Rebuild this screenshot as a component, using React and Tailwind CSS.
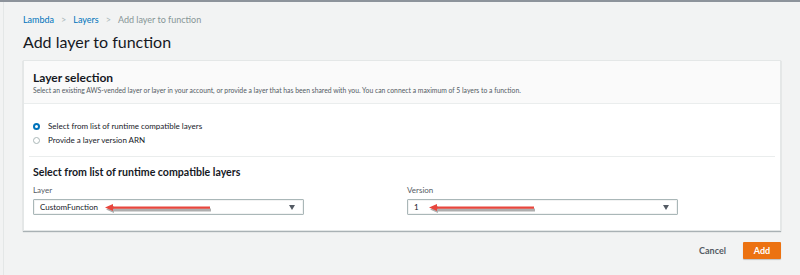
import React from 'react'

const font = { fontFamily: '"Lato", "Open Sans", "Liberation Sans", sans-serif' }

function Arrow({ length }) {
  return (
    <svg width={length + 6} height="12" viewBox={`0 0 ${length + 6} 12`} className="block">
      <g transform="translate(1,2)">
        <path d={`M1 5 L9 1.5 L9 4 L${length} 4 L${length} 7 L9 7 L9 8.5 Z`} fill="#6b6b6b" opacity="0.55" transform="translate(1,1.5)" />
        <path d={`M1 4.5 L9 1 L9 3.5 L${length} 3.5 L${length} 5.8 L9 5.8 L9 8 Z`} fill="#e8463d" />
      </g>
    </svg>
  )
}

function Select({ value, arrowLeft, arrowLength }) {
  return (
    <div className="relative h-[16px] w-[271px] bg-white border border-[#aab7b8] rounded-[1px] flex items-center pl-[6px] pr-[8px] shadow-[inset_0_0_0_1px_#f2f3f3]">
      <span className="text-[8px] text-[#16191f]">{value}</span>
      <span className="ml-auto w-0 h-0 border-l-[3.5px] border-r-[3.5px] border-t-[5px] border-l-transparent border-r-transparent border-t-[#545b64]" />
      <div className="absolute top-[1px]" style={{ left: arrowLeft }}>
        <Arrow length={arrowLength} />
      </div>
    </div>
  )
}

function Radio({ checked, label }) {
  return (
    <label className="flex items-center h-[14px] gap-[8px]">
      {checked ? (
        <span className="w-[7px] h-[7px] rounded-full bg-[#0073bb] flex items-center justify-center">
          <span className="w-[3px] h-[3px] rounded-full bg-white" />
        </span>
      ) : (
        <span className="w-[7px] h-[7px] rounded-full border border-[#aab7b8] bg-white" />
      )}
      <span className="text-[8px] text-[#16191f]">{label}</span>
    </label>
  )
}

export default function App() {
  return (
    <div style={font} className="w-[800px] h-[275px] bg-[#f2f3f3] border-t-2 border-[#8d939b] pl-[3px] overflow-hidden">
      <div className="h-full border-l border-[#e4e7e7] pl-[19px] pr-[20px] pt-[12px]">
        <nav className="flex items-center gap-[7px] text-[9px] leading-[12px]">
          <span className="text-[#0073bb]">Lambda</span>
          <span className="text-[#aab7b8]">&gt;</span>
          <span className="text-[#0073bb]">Layers</span>
          <span className="text-[#aab7b8]">&gt;</span>
          <span className="text-[#879596]">Add layer to function</span>
        </nav>
        <h1 className="mt-[5px] text-[16px] leading-[22px] text-[#16191f]">Add layer to function</h1>

        <div className="mt-[7px] w-[758px] bg-white border border-[#e4e7e7] shadow-[0_1px_1px_rgba(0,28,36,0.3)]">
          <div className="bg-[#fafafa] border-b border-[#eaeded] px-[9px] pt-[9px] pb-[8px]">
            <h2 className="text-[12px] leading-[16px] font-bold text-[#16191f]">Layer selection</h2>
            <p className="text-[6.8px] leading-[10px] text-[#545b64] -mt-[1px]">
              Select an existing AWS-vended layer or layer in your account, or provide a layer that has been shared with you. You can connect a maximum of 5 layers to a function.
            </p>
          </div>

          <div className="px-[9px] pt-[15px] pb-[9px]">
            <Radio checked label="Select from list of runtime compatible layers" />
            <Radio label="Provide a layer version ARN" />
          </div>
          <div className="mx-[5px] border-t border-[#eaeded]" />

          <div className="px-[9px] pt-[8px] pb-[15px]">
            <h3 className="text-[10.6px] leading-[14px] font-bold text-[#16191f]">Select from list of runtime compatible layers</h3>
            <div className="flex mt-[6px]">
              <div className="w-[374px] shrink-0">
                <div className="text-[8px] leading-[11px] text-[#545b64]">Layer</div>
                <div className="mt-[3px]">
                  <Select value="CustomFunction" arrowLeft={69} arrowLength={106} />
                </div>
              </div>
              <div className="w-[271px] shrink-0">
                <div className="text-[8px] leading-[11px] text-[#545b64]">Version</div>
                <div className="mt-[3px]">
                  <Select value="1" arrowLeft={19} arrowLength={106} />
                </div>
              </div>
            </div>
          </div>
        </div>

        <div className="mt-[11px] w-[758px] flex items-center justify-end gap-[17px]">
          <span className="text-[9px] font-bold text-[#545b64]">Cancel</span>
          <button className="h-[17px] w-[38px] bg-[#ec7211] text-white text-[9px] font-bold rounded-[1px] shadow-[0_1px_1px_rgba(0,0,0,0.2)]">Add</button>
        </div>
      </div>
    </div>
  )
}
